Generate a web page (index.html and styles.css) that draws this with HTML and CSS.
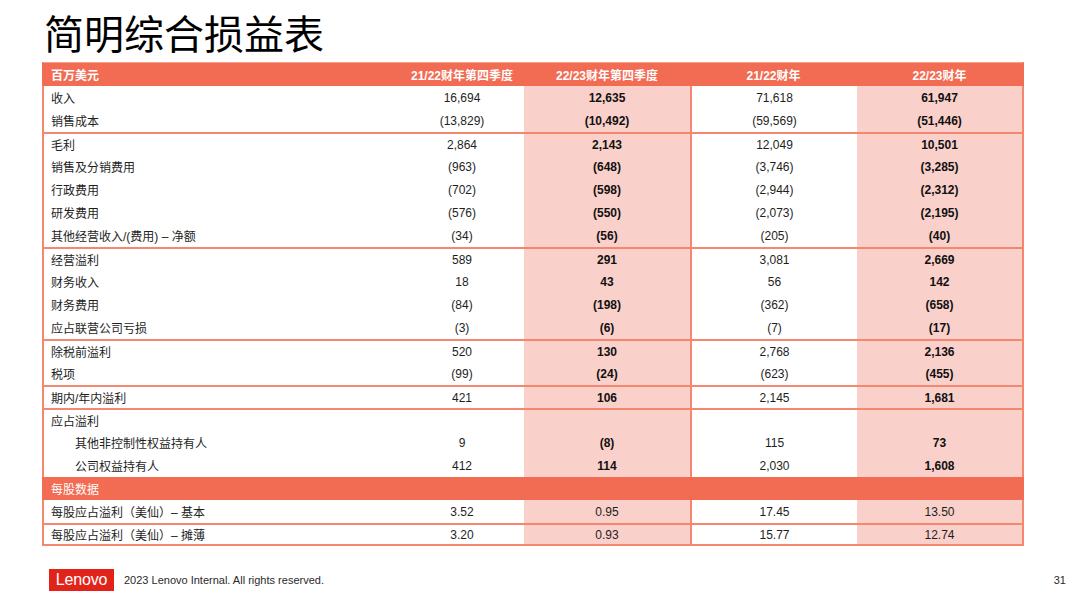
FILE: index.html
```html
<!DOCTYPE html>
<html lang="zh-CN">
<head>
<meta charset="utf-8">
<title>简明综合损益表</title>
<link rel="stylesheet" href="styles.css">
</head>
<body>
<div class="slide">
  <h1 class="title">简明综合损益表</h1>

  <div class="pl">
    <div class="row head">
      <div class="lbl">百万美元</div>
      <div class="c">21/22财年第四季度</div>
      <div class="c">22/23财年第四季度</div>
      <div class="c">21/22财年</div>
      <div class="c">22/23财年</div>
    </div>

    <div class="row"><div class="lbl">收入</div><div class="c">16,694</div><div class="c hl b">12,635</div><div class="c vl">71,618</div><div class="c hl b">61,947</div></div>
    <div class="row"><div class="lbl">销售成本</div><div class="c">(13,829)</div><div class="c hl b">(10,492)</div><div class="c vl">(59,569)</div><div class="c hl b">(51,446)</div></div>

    <div class="row grp"><div class="lbl">毛利</div><div class="c">2,864</div><div class="c hl b">2,143</div><div class="c vl">12,049</div><div class="c hl b">10,501</div></div>
    <div class="row"><div class="lbl">销售及分销费用</div><div class="c">(963)</div><div class="c hl b">(648)</div><div class="c vl">(3,746)</div><div class="c hl b">(3,285)</div></div>
    <div class="row"><div class="lbl">行政费用</div><div class="c">(702)</div><div class="c hl b">(598)</div><div class="c vl">(2,944)</div><div class="c hl b">(2,312)</div></div>
    <div class="row"><div class="lbl">研发费用</div><div class="c">(576)</div><div class="c hl b">(550)</div><div class="c vl">(2,073)</div><div class="c hl b">(2,195)</div></div>
    <div class="row"><div class="lbl">其他经营收入/(费用) – 净额</div><div class="c">(34)</div><div class="c hl b">(56)</div><div class="c vl">(205)</div><div class="c hl b">(40)</div></div>

    <div class="row grp"><div class="lbl">经营溢利</div><div class="c">589</div><div class="c hl b">291</div><div class="c vl">3,081</div><div class="c hl b">2,669</div></div>
    <div class="row"><div class="lbl">财务收入</div><div class="c">18</div><div class="c hl b">43</div><div class="c vl">56</div><div class="c hl b">142</div></div>
    <div class="row"><div class="lbl">财务费用</div><div class="c">(84)</div><div class="c hl b">(198)</div><div class="c vl">(362)</div><div class="c hl b">(658)</div></div>
    <div class="row"><div class="lbl">应占联营公司亏损</div><div class="c">(3)</div><div class="c hl b">(6)</div><div class="c vl">(7)</div><div class="c hl b">(17)</div></div>

    <div class="row grp"><div class="lbl">除税前溢利</div><div class="c">520</div><div class="c hl b">130</div><div class="c vl">2,768</div><div class="c hl b">2,136</div></div>
    <div class="row"><div class="lbl">税项</div><div class="c">(99)</div><div class="c hl b">(24)</div><div class="c vl">(623)</div><div class="c hl b">(455)</div></div>

    <div class="row grp"><div class="lbl">期内/年内溢利</div><div class="c">421</div><div class="c hl b">106</div><div class="c vl">2,145</div><div class="c hl b">1,681</div></div>

    <div class="row grp"><div class="lbl">应占溢利</div><div class="c"></div><div class="c hl b"></div><div class="c vl"></div><div class="c hl b"></div></div>
    <div class="row"><div class="lbl ind">其他非控制性权益持有人</div><div class="c">9</div><div class="c hl b">(8)</div><div class="c vl">115</div><div class="c hl b">73</div></div>
    <div class="row"><div class="lbl ind">公司权益持有人</div><div class="c">412</div><div class="c hl b">114</div><div class="c vl">2,030</div><div class="c hl b">1,608</div></div>

    <div class="row band"><div class="lbl">每股数据</div></div>

    <div class="row"><div class="lbl">每股应占溢利（美仙）– 基本</div><div class="c">3.52</div><div class="c hl">0.95</div><div class="c vl">17.45</div><div class="c hl">13.50</div></div>
    <div class="row grp last"><div class="lbl">每股应占溢利（美仙）– 摊薄</div><div class="c">3.20</div><div class="c hl">0.93</div><div class="c vl">15.77</div><div class="c hl">12.74</div></div>
  </div>

  <footer class="foot">
    <div class="logo">Lenovo</div>
    <div class="copy">2023 Lenovo Internal. All rights reserved.</div>
    <div class="page">31</div>
  </footer>
</div>
</body>
</html>
```

FILE: styles.css
```css
html, body {
  margin: 0;
  padding: 0;
  background: #ffffff;
}

.slide {
  width: 1080px;
  height: 608px;
  display: flex;
  flex-direction: column;
  font-family: "Liberation Sans", "Noto Sans CJK SC", sans-serif;
  color: #1e1e1e;
  overflow: hidden;
}

.title {
  margin: 0;
  padding: 8px 0 0 44px;
  height: 54px;
  box-sizing: border-box;
  font-family: "Noto Sans CJK SC", sans-serif;
  font-weight: 400;
  font-size: 40px;
  line-height: 48px;
  color: #000000;
  letter-spacing: 0;
}

.pl {
  margin: 8px 0 0 42px;
  width: 982px;
}

.row {
  display: grid;
  grid-template-columns: 356px 124px 166px 167px 165px;
  height: 23px;
  box-sizing: border-box;
  border-left: 2px solid #f5866f;
  border-right: 2px solid #f5866f;
  font-size: 12px;
}

.row > div {
  display: flex;
  align-items: center;
  white-space: nowrap;
}

.row .lbl {
  padding-left: 7px;
}

.row .lbl.ind {
  padding-left: 31px;
}

.row .c {
  justify-content: center;
}

.row .hl {
  background: #f9d0ca;
}

.row .b {
  font-weight: 700;
  color: #111111;
}

.row .vl {
  border-left: 2px solid #f5866f;
}

.row.grp {
  border-top: 2px solid #f5866f;
}

.row.last {
  border-bottom: 2px solid #f5866f;
}

.row.head {
  height: 24px;
  background: #f26b53;
  border-top: 1px solid #f7a08e;
  border-left-color: #f26b53;
  border-right-color: #f26b53;
  color: #ffffff;
  font-weight: 700;
}

.row.band {
  display: flex;
  background: #f26b53;
  border-left-color: #f26b53;
  border-right-color: #f26b53;
  color: #ffffff;
}

.foot {
  margin-top: auto;
  height: 40px;
  padding: 0 14px 0 49px;
  display: flex;
  align-items: center;
  box-sizing: border-box;
  margin-bottom: 8px;
}

.logo {
  width: 65px;
  height: 22px;
  background: #e2231a;
  color: #ffffff;
  font-family: "Liberation Sans", sans-serif;
  font-size: 16px;
  line-height: 22px;
  text-align: center;
  letter-spacing: -0.2px;
}

.copy {
  margin-left: 10px;
  font-size: 11px;
  color: #2a2a2a;
}

.page {
  margin-left: auto;
  font-size: 11px;
  color: #2a2a2a;
}
```
